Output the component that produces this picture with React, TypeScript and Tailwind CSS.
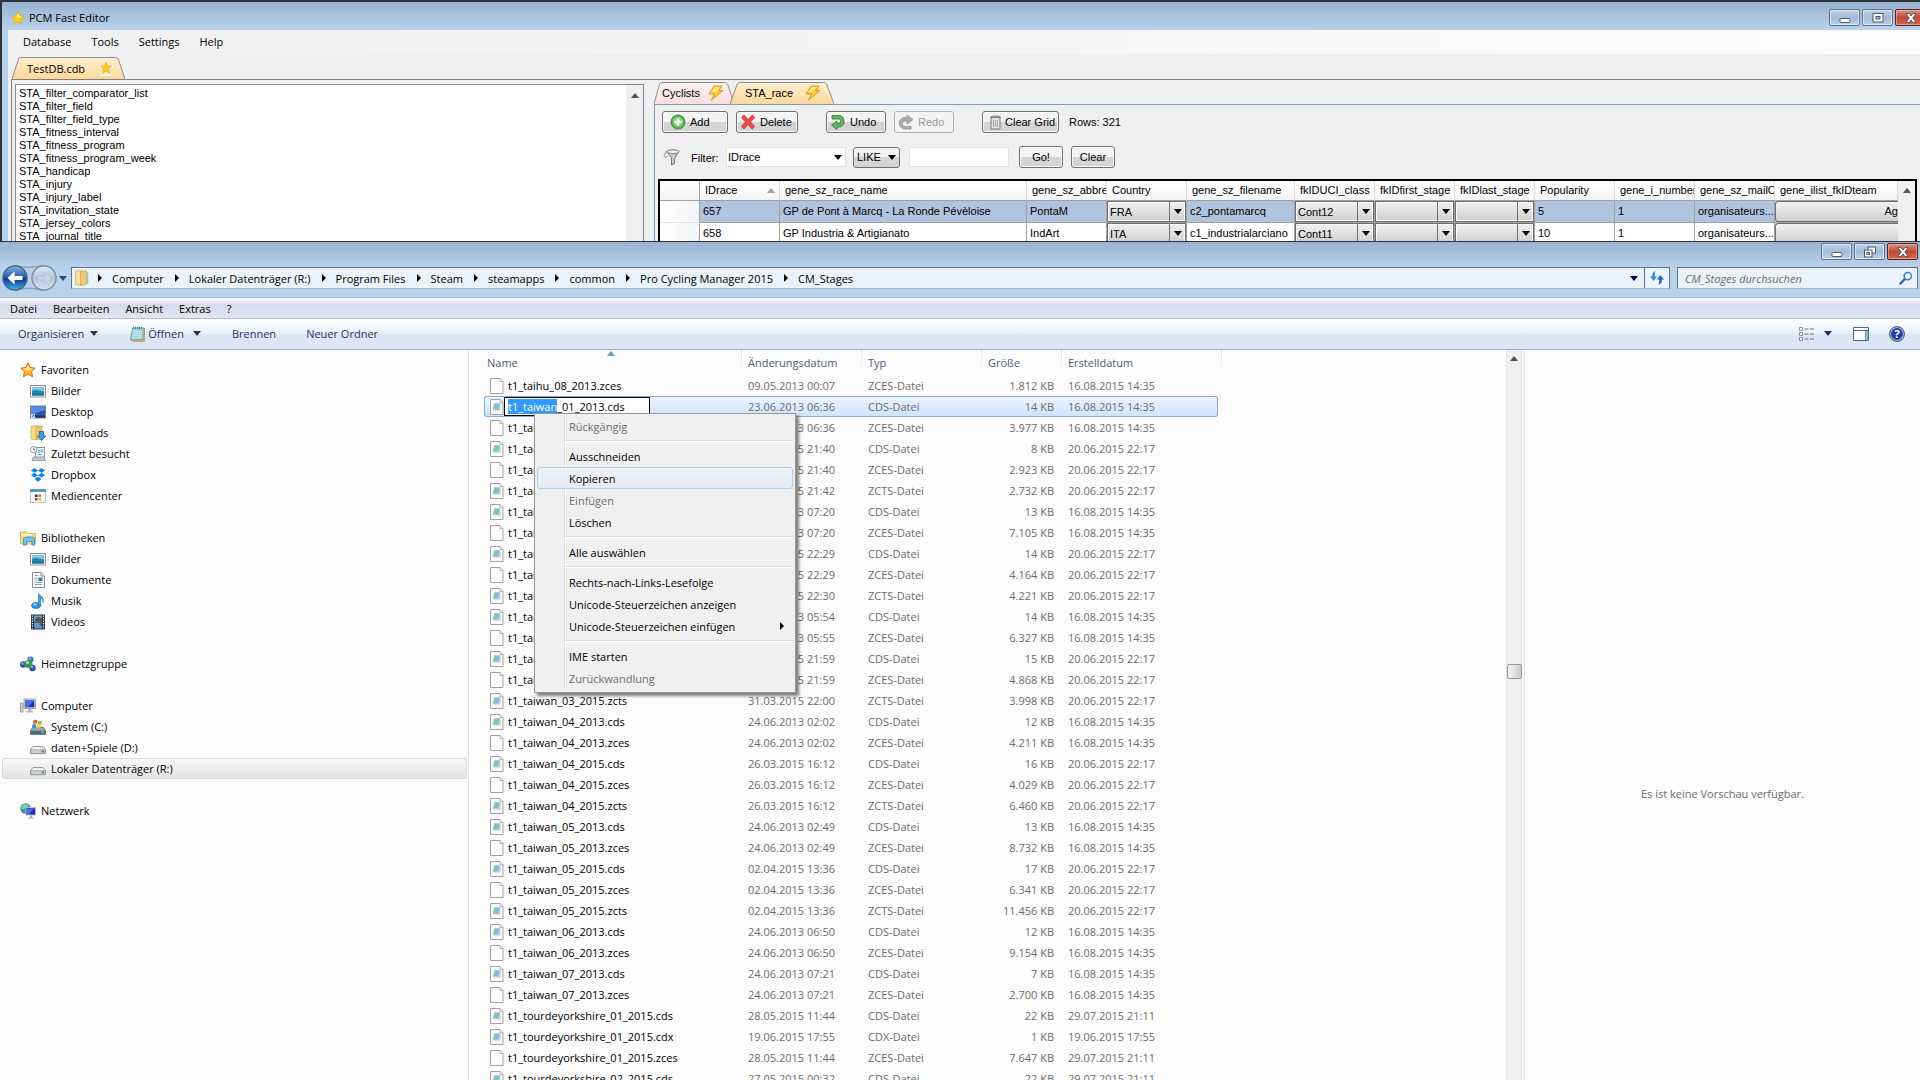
import React from "react";

type IconProps = { className?: string };

/* ---------- small glyphs ---------- */

const CaretDown = ({ className = "" }: IconProps) => (
  <svg viewBox="0 0 8 5" className={`h-[5px] w-2 shrink-0 ${className}`} aria-hidden="true">
    <path d="M0 0h8L4 5z" fill="currentColor" />
  </svg>
);

const CaretUp = ({ className = "" }: IconProps) => (
  <svg viewBox="0 0 8 5" className={`h-[5px] w-2 shrink-0 ${className}`} aria-hidden="true">
    <path d="M0 5h8L4 0z" fill="currentColor" />
  </svg>
);

const CaretRight = ({ className = "" }: IconProps) => (
  <svg viewBox="0 0 4 8" className={`h-2 w-1 shrink-0 ${className}`} aria-hidden="true">
    <path d="M0 0v8l4-4z" fill="currentColor" />
  </svg>
);

const Svg16 = ({ children, className = "h-4 w-4" }: { children: React.ReactNode; className?: string }) => (
  <svg viewBox="0 0 16 16" className={`shrink-0 ${className}`} aria-hidden="true">
    {children}
  </svg>
);

const STAR = "M8 .8l2.200 4.700 5.100.6-3.800 3.500 1 5.100L8 12.200l-4.500 2.500 1-5.100L.7 6.100l5.100-.6z";

const StarIcon = () => (
  <Svg16 className="h-3.5 w-3.5">
    <path d={STAR} fill="#fbd116" stroke="#d9a520" strokeWidth=".8" strokeLinejoin="round" />
    <path d="M8 2.500l1.500 3.600 3.500.5-7 1.400z" fill="#fff27a" />
  </Svg16>
);

const TabStar = () => (
  <Svg16>
    <path d="M2.500 14.500h11v1.500h-11z" fill="#fff" />
    <path d="M8 2l1.700 3.800 4.300.4-3.200 2.900.9 4.400L8 11.300l-3.700 2.200.9-4.400L2 6.200l4.300-.4z" fill="#fbd116" stroke="#fff" strokeWidth="2" strokeLinejoin="round" />
    <path d="M8 2l1.700 3.800 4.300.4-3.200 2.900.9 4.400L8 11.300l-3.700 2.200.9-4.400L2 6.200l4.300-.4z" fill="#fbcb1e" stroke="#d9a520" strokeWidth=".6" />
  </Svg16>
);

const FavStar = () => (
  <Svg16>
    <path d={STAR} fill="#fdb833" stroke="#d8731c" strokeWidth="1" strokeLinejoin="round" />
    <path d="M8 3l1.400 3.300 3.600.5-5 2-5-2 3.600-.5z" fill="#ffe58c" />
  </Svg16>
);

const BoltIcon = () => (
  <Svg16>
    <path d="M6 1h8l-3 4.500h4L3.500 15 6.500 9H1z" fill="#fbcb2e" stroke="#d79a1c" strokeWidth="1" strokeLinejoin="round" />
    <path d="M7 2h5L8 7H3z" fill="#fde58a" />
  </Svg16>
);

const AddIcon = () => (
  <Svg16>
    <circle cx="8" cy="8" r="7" fill="#5cb256" stroke="#3d8b3a" />
    <circle cx="8" cy="8" r="5" fill="#86cf7e" />
    <path d="M8 4.500v7M4.500 8h7" stroke="#fff" strokeWidth="2.400" />
  </Svg16>
);

const DeleteIcon = () => (
  <Svg16>
    <path d="M1.500 3.500L4 1l4 4.500L12.500 1l2 2.500L10.500 8l4 4.500L12 15 8 10.500 4 15l-2.500-2.500L5.500 8z" fill="#ee4b4b" stroke="#c22a2a" strokeWidth=".8" />
  </Svg16>
);

const UndoIcon = () => (
  <Svg16>
    <path d="M2 1.500h7a5 5 0 0 1 5 5V8a5 5 0 0 1-5 5H7v2.500L1.500 11.200 7 7v2.500h2a1.500 1.500 0 0 0 1.500-1.500V6.500A1.500 1.500 0 0 0 9 5H2z" fill="#62b45c" stroke="#35803a" strokeWidth=".9" />
  </Svg16>
);

const RedoIcon = () => (
  <Svg16>
    <path d="M13 12.500v2.500H7a5.500 5.500 0 0 1 0-11.500h2V1l6 4.500L9 10V7H7a2.600 2.600 0 0 0 0 5.500z" fill="#adadad" stroke="#989898" strokeWidth=".9" />
  </Svg16>
);

const TrashIcon = () => (
  <Svg16>
    <path d="M4 3.500h9V15H4z" fill="#e2e2e2" stroke="#7d7d7d" />
    <path d="M3.500 3.500c0-2 10-2 10 0z" fill="#c4c4c4" stroke="#7d7d7d" />
    <path d="M6.500 6v7M8.500 6v7M10.500 6v7" stroke="#a5a5a5" />
  </Svg16>
);

const FunnelIcon = () => (
  <svg viewBox="0 0 18 18" className="h-[18px] w-[18px] shrink-0" aria-hidden="true">
    <path d="M3.500 3.500C6 1.500 13 1.500 16 3.500l-4 6-.5 6-3 1.500V9.500z" fill="#c9c9d2" stroke="#74747f" />
    <ellipse cx="10" cy="3.700" rx="6" ry="1.800" fill="#f1f1f6" stroke="#74747f" strokeWidth=".8" />
    <path d="M4.500 3.500C1 5 .5 8 2 9s3 0 3-1.500" fill="none" stroke="#8c8c96" />
  </svg>
);

/* ---------- explorer icons ---------- */

const PictureIcon = () => (
  <Svg16>
    <rect x=".5" y="2.500" width="15" height="11.500" fill="#fff" stroke="#8b9299" />
    <rect x="2" y="4" width="12" height="8.500" fill="#7cc6ef" />
    <path d="M2 8c3-2 6-1 12 .5v4H2z" fill="#2f8a86" />
    <path d="M2 10.500c4-1 8-.5 12 .5v1.500H2z" fill="#2171b5" />
  </Svg16>
);

const DesktopIcon = () => (
  <Svg16>
    <rect x=".5" y="2" width="15" height="12" fill="#2b56b5" stroke="#7b8697" />
    <path d="M1 2.500h14V6L1 11z" fill="#5b8be0" />
    <path d="M1 11.500h14v2H1z" fill="#27364e" />
    <rect x="1" y="10" width="4" height="4" fill="#cfe4fb" />
    <path d="M2 13l2-2M2.500 11H4v1.500" stroke="#1b5fa8" fill="none" strokeWidth=".8" />
  </Svg16>
);

const DownloadsIcon = () => (
  <Svg16>
    <path d="M1 1.500l6-1V15l-6-1z" fill="#f3dc88" stroke="#c9a94b" strokeWidth=".7" />
    <path d="M6 1h6v13.500H6z" fill="#e8c766" stroke="#c9a94b" strokeWidth=".7" />
    <path d="M9.500 6.500h4V11H16l-4.500 4.500L7.500 11h2z" fill="#3f9be6" stroke="#1b5fa8" strokeWidth=".8" />
  </Svg16>
);

const RecentIcon = () => (
  <Svg16>
    <rect x="5.500" y="1.500" width="9" height="10" fill="#eef3f8" stroke="#8a949e" />
    <path d="M8 4.500h2M8 6.500h2M8 8.500h4" stroke="#5aa0d8" />
    <path d="M10.500 3.500h2.500v3h-2.500z" fill="#7fc0ea" />
    <path d="M3 11h11l1.500 3.500H2z" fill="#c3c8cd" stroke="#8a949e" strokeWidth=".8" />
    <circle cx="3.700" cy="3.700" r="3.200" fill="#fff" stroke="#8a949e" />
    <path d="M3.700 2v2h1.500" stroke="#444455" fill="none" strokeWidth=".8" />
  </Svg16>
);

const DropboxIcon = () => (
  <Svg16>
    <path
      d="M4.500 1L8 3.400 4.500 5.800 1 3.400zM11.500 1L15 3.400l-3.500 2.400L8 3.400zM4.500 5.800L8 8.200l-3.500 2.400L1 8.200zM11.500 5.800L15 8.200l-3.500 2.400L8 8.200zM8 9.500l3.500 2.400L8 14.800l-3.500-2.900z"
      fill="#1081de"
    />
  </Svg16>
);

const MediaIcon = () => (
  <Svg16>
    <rect x=".5" y="1.500" width="15" height="13" fill="#f7f8fa" stroke="#a3a9b0" strokeWidth=".7" />
    <path d="M0 1h16v3H0z" fill="#5899c9" />
    <path d="M5 6.500h2.500V9H5z" fill="#333333" />
    <path d="M8.500 6.500H11V9H8.500z" fill="#d3652b" />
    <path d="M5 10h2.500v2.500H5z" fill="#a23838" />
    <path d="M8.500 10H11v2.500H8.500z" fill="#e8b22c" />
  </Svg16>
);

const LibraryIcon = () => (
  <Svg16>
    <path d="M.5 2h6l1 1.500h8V14H.5z" fill="#f3dc88" stroke="#c9a94b" strokeWidth=".8" />
    <path d="M2 4h10v1.500H2z" fill="#fff6cf" />
    <path d="M3.500 8.500c0-2 11-2 11 0V15H12v-3.500H6.500V15h-3z" fill="#6fc4ee" stroke="#2f84b8" strokeWidth=".8" />
  </Svg16>
);

const DocumentIcon = () => (
  <Svg16>
    <path d="M2.500.5H11L14.500 4v11.500h-12z" fill="#fff" stroke="#868d94" />
    <path d="M11 .5V4h3.500" fill="#dfe3e7" stroke="#868d94" />
    <path d="M4.500 3.500h4M4.500 6h3M4.500 8h3M4.500 10.500h8M4.500 12.500h8" stroke="#8fa3bb" />
    <path d="M8.500 5.500h4v3.500h-4z" fill="#2d73b6" />
  </Svg16>
);

const MusicIcon = () => (
  <Svg16>
    <ellipse cx="6" cy="12.500" rx="4.500" ry="3" fill="#2b93df" stroke="#176bb0" strokeWidth=".6" />
    <path d="M8.500 12.500V.5c1.500 2.500 6 3.500 4.500 9 .2-3-1.200-4-2.500-4.500v7.500z" fill="#3ba3ea" stroke="#176bb0" strokeWidth=".6" />
    <ellipse cx="5" cy="11.500" rx="2" ry="1" fill="#9ad5fa" />
  </Svg16>
);

const VideoIcon = () => (
  <Svg16>
    <rect x="1" y=".5" width="14" height="15" fill="#2a3138" />
    <path d="M4 1.500h8v6H4z" fill="#57a9e4" />
    <path d="M4 8.500h8v6H4z" fill="#4f9bdc" />
    <path d="M5 5l3-2 4 1v3.500H6zM4 12l2 2.500H4zM9 10l3-1v4z" fill="#6d4634" />
    <path d="M2.500 1.500v13M13.500 1.500v13" stroke="#fff" strokeWidth="1.200" strokeDasharray="1.200 1.300" />
  </Svg16>
);

const HomeGroupIcon = () => (
  <Svg16>
    <circle cx="10.500" cy="3.500" r="3" fill="#3c6fd0" />
    <circle cx="3.200" cy="8.500" r="3.200" fill="#2f55b4" />
    <circle cx="12.500" cy="12" r="3.200" fill="#3350b8" />
    <circle cx="8.500" cy="8" r="4" fill="#3f9a4a" />
    <circle cx="7.500" cy="6.500" r="1.600" fill="#a4e29a" />
    <circle cx="2.400" cy="7.500" r="1.100" fill="#a9c6f5" />
    <circle cx="12" cy="11" r="1.100" fill="#a9c6f5" />
    <circle cx="10" cy="2.500" r="1" fill="#a9c6f5" />
  </Svg16>
);

const ComputerIcon = () => (
  <Svg16>
    <rect x="4" y="1" width="11.500" height="9.500" fill="#d6dade" stroke="#8d959d" strokeWidth=".8" />
    <rect x="5.300" y="2.300" width="9" height="7" fill="#1b2fb4" />
    <path d="M5.300 2.300h9L8 9.300H5.300z" fill="#4c6fe6" />
    <path d="M8 10.500h3.500V13H13v1.500H6.500V13H8z" fill="#b5babf" />
    <rect x=".5" y="5" width="2.500" height="9" fill="#cfd4c9" stroke="#868e80" strokeWidth=".7" />
  </Svg16>
);

const SystemDriveIcon = () => (
  <Svg16>
    <path d="M2.500 8.500h11l2 3v4H.5v-4z" fill="#9aa5a8" stroke="#5f6a6d" strokeWidth=".8" />
    <path d="M1 11.800h14V15H1z" fill="#3f6f73" />
    <rect x="11.500" y="12.500" width="2" height="1.500" fill="#8ee36c" />
    <path d="M3.500 1.500c1.500-1 3-.8 4 0L6.800 4.800c-1.200-.8-2.600-.8-4 0z" fill="#e65a28" />
    <path d="M8.300 1.700c1.200.8 2.600.8 4 0l-.8 3.400c-1.400.8-2.800.7-4 0z" fill="#86c440" />
    <path d="M2.500 5.500c1.500-.9 2.900-.8 4 0l-.8 3c-1.300-.7-2.600-.7-4 0z" fill="#3f8fe0" />
    <path d="M7.300 5.700c1.200.8 2.600.8 4 0l-.8 3.200c-1.400.7-2.800.6-4 0z" fill="#f8c62c" />
  </Svg16>
);

const DriveIcon = () => (
  <Svg16>
    <path d="M3 6.500h10l2.500 3v4.200H.5V9.500z" fill="#f2f3f4" stroke="#888d91" strokeWidth=".9" />
    <path d="M.8 9.700h14.400v3.800H.8z" fill="#cdd1d4" stroke="#888d91" strokeWidth=".6" />
    <rect x="11.500" y="10.500" width="2.500" height="2" fill="#5a8f45" />
  </Svg16>
);

const NetworkIcon = () => (
  <Svg16>
    <circle cx="5.500" cy="5.500" r="5.200" fill="#2c8bc4" />
    <path d="M2 2.500c2-1.500 5-2 6-.5S5 5 4 6 1.500 6 .8 5z" fill="#7ed08b" />
    <path d="M5.500 7.500c1.500 0 2 1 1 2.800H5z" fill="#5cba70" />
    <rect x="6" y="4.500" width="9.500" height="7.500" fill="#1b2fb4" stroke="#b7bec6" />
    <path d="M7 5.500h7.500L9 11H7z" fill="#4c6fe6" />
    <path d="M10 12.500h2v2h1.500v1h-5v-1H10z" fill="#a9b0b6" />
  </Svg16>
);

const NotepadIcon = () => (
  <Svg16>
    <path d="M3.500 2h12l-1.500 12H1.500z" fill="#9fd6dd" stroke="#5c9ca6" strokeWidth=".8" />
    <path d="M14 4l1.500-1v12.500H4L2.500 14H14z" fill="#d8b98a" stroke="#8f7a57" strokeWidth=".5" />
    <path d="M4 5.500h9.500M3.800 7.500h9.500M3.500 9.500h9.500M3.300 11.500h9.500" stroke="#c9ecf0" strokeWidth=".8" />
    <path d="M4.500.8v2M6.500.8v2M8.500.8v2M10.500.8v2M12.500.8v2" stroke="#4c6a70" strokeWidth=".9" />
  </Svg16>
);

const FolderIcon = () => (
  <Svg16>
    <path d="M1.500 1l6-.5V15.500l-6-.8z" fill="#f6e29a" stroke="#d0b25a" strokeWidth=".7" />
    <path d="M6.500 1.500l6-.8v13.800l-6 .8z" fill="#ecca6b" stroke="#c9a94b" strokeWidth=".7" />
    <path d="M12.500 2.500h1.800v11.500h-1.800z" fill="#9cc7c4" />
  </Svg16>
);

const FileIcon = ({ blank }: { blank: boolean }) => (
  <svg viewBox="0 0 14 16" className="h-4 w-[14px] shrink-0" aria-hidden="true">
    <path d="M.5.5h9.500l3 3v12H.5z" fill="#fbfbfb" stroke="#a3a3a3" />
    <path d="M10 .5v3h3" fill="#eeeeee" stroke="#a3a3a3" strokeWidth=".8" />
    {!blank && <path d="M4.500 4.500h5.500L8.800 10.500H3z" fill="#7cc0cd" stroke="#a5c8cf" strokeWidth=".7" />}
    {!blank && <path d="M9.500 10.500l1-5.500v6.500H4l-.8-.8z" fill="#c9c4b6" />}
  </svg>
);

/* ---------- window caption buttons ---------- */

function Caption({ maximised }: { maximised: boolean }) {
  const base =
    "flex h-[17px] w-[31px] items-center justify-center rounded-[2px] border border-[#5d7593] bg-linear-to-b from-[#bdd0e6] via-[#a3bcd9] to-[#b9d0e8] shadow-[inset_0_0_0_1px_rgba(255,255,255,0.5)]";
  return (
    <div className="flex gap-0.5">
      <button className={base} aria-label="Minimieren">
        <svg viewBox="0 0 14 10" className="h-[10px] w-[14px]">
          <rect x="2" y="5.500" width="10" height="4" rx="1" fill="#fff" stroke="#4b5a6c" />
        </svg>
      </button>
      <button className={base} aria-label="Maximieren">
        {maximised ? (
          <svg viewBox="0 0 14 12" className="h-3 w-[14px]">
            <rect x="5" y="1" width="7.500" height="6" fill="#fff" stroke="#4b5a6c" />
            <rect x="1.500" y="4" width="7.500" height="7" fill="#fff" stroke="#4b5a6c" />
            <rect x="4" y="6.500" width="2.500" height="2" fill="#a3bcd9" stroke="#4b5a6c" />
          </svg>
        ) : (
          <svg viewBox="0 0 14 12" className="h-3 w-[14px]">
            <rect x="2" y="1.500" width="10" height="8.500" fill="#fff" stroke="#4b5a6c" />
            <rect x="5" y="4.500" width="4" height="2.500" fill="#a3bcd9" stroke="#4b5a6c" />
          </svg>
        )}
      </button>
      <button
        aria-label="Schließen"
        className="flex h-[17px] w-[31px] items-center justify-center rounded-[2px] border border-[#5a1f22] bg-linear-to-b from-[#d98f83] via-[#c14a36] to-[#cf6a50] shadow-[inset_0_0_0_1px_rgba(255,255,255,0.35)]"
      >
        <svg viewBox="0 0 12 10" className="h-[10px] w-3">
          <path d="M1 .5h3l2 2.500L8 .5h3L7.800 5 11 9.500H8L6 7 4 9.500H1L4.200 5z" fill="#fff" stroke="#4c4550" strokeWidth=".8" />
        </svg>
      </button>
    </div>
  );
}

/* ---------- database editor ---------- */

const editorMenus = ["Database", "Tools", "Settings", "Help"];

const tables = [
  "STA_filter_comparator_list",
  "STA_filter_field",
  "STA_filter_field_type",
  "STA_fitness_interval",
  "STA_fitness_program",
  "STA_fitness_program_week",
  "STA_handicap",
  "STA_injury",
  "STA_injury_label",
  "STA_invitation_state",
  "STA_jersey_colors",
  "STA_journal_title",
];

const gridColumns = [
  { label: "IDrace", width: "w-20" },
  { label: "gene_sz_race_name", width: "w-[247px]" },
  { label: "gene_sz_abbre", width: "w-20" },
  { label: "Country", width: "w-20" },
  { label: "gene_sz_filename", width: "w-[108px]" },
  { label: "fkIDUCI_class", width: "w-20" },
  { label: "fkIDfirst_stage", width: "w-20" },
  { label: "fkIDlast_stage", width: "w-20" },
  { label: "Popularity", width: "w-20" },
  { label: "gene_i_number", width: "w-20" },
  { label: "gene_sz_mailO", width: "w-20" },
  { label: "gene_ilist_fkIDteam", width: "" },
];

const races = [
  { id: "657", name: "GP de Pont à Marcq - La Ronde Pévèloise", abbr: "PontaM", country: "FRA", file: "c2_pontamarcq", cls: "Cont12", pop: "5", team: "Ag" },
  { id: "658", name: "GP Industria & Artigianato", abbr: "IndArt", country: "ITA", file: "c1_industrialarciano", cls: "Cont11", pop: "10", team: "" },
];

function Tab({ label, width, active, pink, icon, slant }: { label: string; width: string; active?: boolean; pink?: boolean; icon: React.ReactNode; slant: string }) {
  return (
    <button role="tab" aria-selected={!!active} className={`relative flex h-[22px] items-center justify-between ${width}`}>
      <svg className="absolute inset-0 h-full w-full" viewBox="0 0 100 22" preserveAspectRatio="none" aria-hidden="true">
        <defs>
          <linearGradient id={pink ? "tabPink" : "tabGold"} x1="0" y1="0" x2="0" y2="1">
            <stop offset="0" stopColor={pink ? "#fdf3f2" : "#fef0cf"} />
            <stop offset="1" stopColor={pink ? "#fbdedb" : "#fdd79a"} />
          </linearGradient>
        </defs>
        <path d={slant} fill={pink ? "url(#tabPink)" : "url(#tabGold)"} stroke="#8a8f98" vectorEffect="non-scaling-stroke" />
      </svg>
      <span className="relative">{label}</span>
      <span className="relative">{icon}</span>
    </button>
  );
}

const winButton =
  "flex h-[22px] items-center rounded-[3px] border border-[#707070] bg-linear-to-b from-[#f3f3f3] from-50% to-[#d4d4d4] to-50% shadow-[inset_0_0_0_1px_rgba(255,255,255,0.8)]";

function GridSelect({ value, label }: { value: string; label: string }) {
  return (
    <div className="relative h-[21px] border border-[#707070] bg-linear-to-b from-[#f1f1f1] to-[#cfcfcf] shadow-[inset_0_0_0_1px_#fbfbfb]">
      <select aria-label={label} defaultValue={value} className="h-full w-full appearance-none bg-transparent pl-0.5 text-[11px] leading-4">
        <option>{value}</option>
      </select>
      <span className="pointer-events-none absolute inset-y-0 right-0 flex w-4 items-center justify-center border-l border-[#707070]">
        <CaretDown />
      </span>
    </div>
  );
}

function RaceGrid() {
  return (
    <div className="mx-[3px] flex flex-1 overflow-hidden border-2 border-b-0 border-black bg-white">
      <table className="w-full flex-1 table-fixed border-separate border-spacing-0">
        <thead>
          <tr className="h-5">
            <th className="w-10 border-r border-b border-[#a0a0a0] bg-linear-to-b from-white to-[#f2f3f5]" />
            {gridColumns.map((c, i) => (
              <th key={c.label} className={`overflow-hidden border-r border-r-[#dcdcdc] border-b border-b-[#a0a0a0] bg-linear-to-b from-white to-[#f4f5f6] p-0 text-left font-normal whitespace-nowrap ${c.width}`}>
                <span className="flex items-center justify-between pl-[5px]">
                  {c.label}
                  {i === 0 && <CaretUp className="mr-1 text-[#a0a0a0]" />}
                </span>
              </th>
            ))}
          </tr>
        </thead>
        <tbody>
          {races.map((r, i) => {
            const cell = `overflow-hidden border-r border-b border-[#a0a0a0] p-0 pl-[3px] whitespace-nowrap ${i === 0 ? "bg-[#b0c4de]" : "bg-white"}`;
            const box = "border-r border-b border-[#a0a0a0] bg-white p-0";
            return (
              <tr key={r.id} className="h-[22px]">
                <td className="border-r border-b border-r-[#a0a0a0] border-b-[#e2e2e2] bg-linear-to-r from-white to-[#f2f4f7] p-0" />
                <td className={cell}>{r.id}</td>
                <td className={cell}>{r.name}</td>
                <td className={cell}>{r.abbr}</td>
                <td className={box}><GridSelect value={r.country} label="Country" /></td>
                <td className={cell}>{r.file}</td>
                <td className={box}><GridSelect value={r.cls} label="fkIDUCI_class" /></td>
                <td className={box}><GridSelect value="" label="fkIDfirst_stage" /></td>
                <td className={box}><GridSelect value="" label="fkIDlast_stage" /></td>
                <td className={cell}>{r.pop}</td>
                <td className={cell}>1</td>
                <td className={cell}>organisateurs...</td>
                <td className="overflow-hidden border-b border-[#a0a0a0] p-0">
                  <button className="flex h-[21px] w-full items-center justify-end rounded-l-[3px] border border-r-0 border-[#707070] bg-linear-to-b from-[#f1f1f1] to-[#cfcfcf]">{r.team}</button>
                </td>
              </tr>
            );
          })}
        </tbody>
      </table>
      <div className="flex w-[17px] justify-center bg-[#f0f0f0] pt-[7px]">
        <CaretUp className="text-[#505050]" />
      </div>
    </div>
  );
}

function EditorWindow() {
  return (
    <section className="flex h-[241px] shrink-0 flex-col overflow-hidden border-t-2 border-l-2 border-[#2f3238] bg-[#b9d1ea] font-['Liberation_Sans',Arial,sans-serif] text-[11px] leading-[13px]">
      <header className="flex h-7 shrink-0 items-center justify-between bg-linear-to-b from-[#99b4d1] to-[#b9d1ea] pt-[3px]">
        <h1 className="flex items-center gap-1 pl-[9px] font-['Open_Sans','Noto_Sans',sans-serif]">
          <StarIcon />
          PCM Fast Editor
        </h1>
        <div className="-mr-1.5">
          <Caption maximised={false} />
        </div>
      </header>
      <div className="ml-1.5 flex min-h-0 flex-1 flex-col bg-[#f0f0f0]">
        <nav className="flex h-6 shrink-0 items-center gap-5 bg-linear-to-r from-[#f0f0f0] to-[#fcfcfc] pb-0.5 pl-[15px] font-['Open_Sans','Noto_Sans',sans-serif]">
          {editorMenus.map((m) => (
            <button key={m}>{m}</button>
          ))}
        </nav>
        <div className="mt-[3px] flex shrink-0 pl-1" role="tablist">
          <Tab label="TestDB.cdb" active width="w-[113px] pr-[11px] pl-[15px] font-['Open_Sans','Noto_Sans',sans-serif]" icon={<TabStar />} slant="M0 22L6 1.500Q7 .5 8 .5H91Q93 .5 94 2L100 22" />
        </div>
        <div className="ml-[3px] flex min-h-0 flex-1 gap-2.5 border-t border-l border-[#808080]">
          <div className="mt-1 ml-[3px] flex w-[629px] border border-b-0 border-[#828790] bg-white">
            <ul className="flex-1 pt-0.5 pl-[3px]">
              {tables.map((t) => (
                <li key={t} className="h-[13px] whitespace-nowrap">{t}</li>
              ))}
            </ul>
            <div className="flex w-[17px] justify-center bg-[#f0f0f0] pt-2">
              <CaretUp className="text-[#505050]" />
            </div>
          </div>
          <div className="flex min-w-0 flex-1 flex-col">
            <div className="mt-[2px] flex shrink-0" role="tablist">
              <Tab label="Cyclists" pink width="w-20 pr-[10px] pl-2" icon={<BoltIcon />} slant="M0 22L7 2Q8 .5 10 .5H88Q91 .5 92 2L100 22" />
              <div className="-ml-1">
                <Tab label="STA_race" active width="w-[104px] pr-[13px] pl-[15px]" icon={<BoltIcon />} slant="M0 22L7 2Q8 .5 10 .5H90Q92 .5 93 2L100 22" />
              </div>
            </div>
            <div className="flex min-h-0 flex-1 flex-col border-t border-l border-[#7f9db9]">
              <div className="flex shrink-0 items-center pt-1.5 pl-[7px]">
                <button className={`${winButton} w-[66px] gap-1 pl-[7px]`}><AddIcon />Add</button>
                <button className={`${winButton} ml-2 w-[62px] gap-1 pl-[3px]`}><DeleteIcon />Delete</button>
                <button className={`${winButton} ml-7 w-[60px] gap-1 pl-[3px]`}><UndoIcon />Undo</button>
                <button disabled className="ml-2 flex h-[22px] w-[60px] items-center gap-1 rounded-[3px] border border-[#adb2b5] bg-[#f4f4f4] pl-[3px] text-[#9a9a9a]"><RedoIcon />Redo</button>
                <button className={`${winButton} ml-7 w-[77px] gap-0.5 pl-1`}><TrashIcon />Clear Grid</button>
                <span className="ml-2.5">Rows: 321</span>
              </div>
              <div className="flex shrink-0 items-center pt-[13px] pb-[11px] pl-2">
                <FunnelIcon />
                <label htmlFor="filter-column" className="w-[45px] pt-0.5 pl-2.5">Filter:</label>
                <div className="relative flex">
                  <select id="filter-column" defaultValue="IDrace" className="h-5 w-[120px] appearance-none border border-[#e3e3e3] bg-white pl-px text-[11px]">
                    <option>IDrace</option>
                  </select>
                  <CaretDown className="pointer-events-none absolute top-2 right-1" />
                </div>
                <div className="relative ml-[7px] flex">
                  <select aria-label="Operator" defaultValue="LIKE" className="h-[21px] w-[47px] appearance-none rounded-[3px] border border-[#707070] bg-linear-to-b from-[#f3f3f3] from-50% to-[#d4d4d4] to-50% pl-[3px] text-[11px]">
                    <option>LIKE</option>
                  </select>
                  <CaretDown className="pointer-events-none absolute top-2 right-1" />
                </div>
                <input aria-label="Filter value" className="ml-[9px] h-5 w-[100px] border border-[#e3e3e3] bg-white" />
                <button className={`${winButton} ml-2.5 w-11 justify-center`}>Go!</button>
                <button className={`${winButton} ml-2 w-11 justify-center`}>Clear</button>
              </div>
              <RaceGrid />
            </div>
          </div>
        </div>
      </div>
    </section>
  );
}

/* ---------- explorer ---------- */

const crumbs = ["Computer", "Lokaler Datenträger (R:)", "Program Files", "Steam", "steamapps", "common", "Pro Cycling Manager 2015", "CM_Stages"];

function AddressRow() {
  return (
    <div className="flex items-center">
      <svg viewBox="0 0 58 28" className="ml-px h-7 w-[58px] shrink-0" role="img" aria-label="Zurück und Vorwärts">
        <defs>
          <linearGradient id="navBack" x1="0" y1="0" x2="0" y2="1">
            <stop offset="0" stopColor="#8fb4e6" />
            <stop offset=".5" stopColor="#1d4fa8" />
            <stop offset=".52" stopColor="#0d3480" />
            <stop offset="1" stopColor="#38b6f5" />
          </linearGradient>
          <linearGradient id="navForward" x1="0" y1="0" x2="0" y2="1">
            <stop offset="0" stopColor="#dfe8f3" />
            <stop offset=".5" stopColor="#b4c5d9" />
            <stop offset="1" stopColor="#d3e1ef" />
          </linearGradient>
        </defs>
        <path d="M14 1.500Q28 5 42 1.500M14 26.500Q28 22 42 26.500" fill="none" stroke="#8ba4c2" strokeWidth="1.500" />
        <circle cx="14" cy="14" r="12" fill="url(#navBack)" stroke="#4d6485" strokeWidth="1.500" />
        <circle cx="43" cy="14" r="12" fill="url(#navForward)" stroke="#7d8fa8" strokeWidth="1.500" />
        <path d="M6.500 14l7-6.500v4.500h8v4h-8v4.500z" fill="#fff" />
        <path d="M50.500 14l-7-6v4h-7v4h7v4z" fill="#c9d6e5" stroke="#a9bacd" strokeWidth=".6" />
      </svg>
      <button aria-label="Letzte Seiten" className="pr-1 text-[#1f4e86]"><CaretDown /></button>
      <div className="flex h-[22px] min-w-0 flex-1 items-center border border-[#5d7188] border-b-[#a8bdd3] bg-[#eaf2fb] pl-0.5">
        <FolderIcon />
        {crumbs.map((c, i) => (
          <React.Fragment key={c}>
            <CaretRight className={i === 0 ? "mr-2.5 ml-2" : "mr-2.5 ml-[11px]"} />
            <a href="#" className="whitespace-nowrap">{c}</a>
          </React.Fragment>
        ))}
        <span className="flex-1" />
        <button aria-label="Vorherige Orte" className="mr-1.5 text-[#000050]"><CaretDown /></button>
        <button aria-label="Aktualisieren" className="flex h-full w-[25px] items-center justify-center border-l border-[#5d7188]">
          <Svg16>
            <path d="M6.500 1C3.500 2 3 4 3.200 6.500H1l3.600 4.500L8 6.500H6C5.800 4.500 5.800 2.500 6.500 1z" fill="#3a8fd0" />
            <path d="M9.500 15c3-1 3.500-3 3.300-5.500H15l-3.600-4.500L8 9.500h2c.2 2 .2 4-.5 5.500z" fill="#2c66b4" />
          </Svg16>
        </button>
      </div>
      <div className="mr-0.5 ml-[7px] flex h-[22px] w-[241px] items-center border border-[#5d7188] border-b-[#a8bdd3] bg-[#eaf2fb] px-1">
        <input aria-label="CM_Stages durchsuchen" placeholder="CM_Stages durchsuchen" className="min-w-0 flex-1 bg-transparent pl-[3px] italic placeholder:text-[#6d6d6d]" />
        <Svg16 className="h-3.5 w-3.5">
          <path d="M6.800 9L1.500 14.500" stroke="#2a66b0" strokeWidth="2.500" strokeLinecap="round" />
          <circle cx="10" cy="5.800" r="4.200" fill="#e4f3fd" stroke="#3f86c9" strokeWidth="1.700" />
        </Svg16>
      </div>
    </div>
  );
}

function Toolbar() {
  return (
    <div className="flex h-[31px] shrink-0 items-center border-b border-[#9bb3cc] bg-linear-to-b from-white via-[#e8f1fb] via-48% to-[#dce6f4] to-52% pb-px pl-[18px] text-[#1e395b]">
      <button className="flex items-center gap-1.5">Organisieren<CaretDown /></button>
      <button className="ml-[31px] flex items-center gap-[3px]"><NotepadIcon />Öffnen<CaretDown className="ml-1.5" /></button>
      <button className="ml-[31px]">Brennen</button>
      <button className="ml-[30px]">Neuer Ordner</button>
      <div className="flex-1" />
      <button aria-label="Ansicht ändern" className="flex items-center gap-2.5">
        <Svg16>
          <path d="M1.500 1.500h3v3h-3zM1.500 6.500h3v3h-3zM1.500 11.500h3v3h-3z" fill="#fff" stroke="#7f93aa" />
          <path d="M6.500 3h4M12 3h4M6.500 8h4M12 8h4M6.500 13h4M12 13h4" stroke="#5f7590" />
        </Svg16>
        <CaretDown />
      </button>
      <button aria-label="Vorschaufenster" className="ml-[21px]">
        <Svg16>
          <path d="M.5 1.500h15v13H.5z" fill="#fff" stroke="#4c6a8c" />
          <path d="M1 4.500h14" stroke="#4c6a8c" />
          <path d="M12.500 5h2.500v9h-2.500z" fill="#8ec6d6" stroke="#4a8797" strokeWidth=".7" />
        </Svg16>
      </button>
      <button aria-label="Hilfe" className="mr-[15px] ml-5 flex h-4 w-4 items-center justify-center rounded-full border border-[#5a6a86] bg-[#2443a8] text-[11px] leading-none font-bold text-white shadow-[inset_0_0_0_1px_#b9c6e6]">?</button>
    </div>
  );
}

type NavItem = { label: string; icon: () => React.ReactElement; selected?: boolean };
const navGroups: { head: NavItem; items: NavItem[] }[] = [
  {
    head: { label: "Favoriten", icon: FavStar },
    items: [
      { label: "Bilder", icon: PictureIcon },
      { label: "Desktop", icon: DesktopIcon },
      { label: "Downloads", icon: DownloadsIcon },
      { label: "Zuletzt besucht", icon: RecentIcon },
      { label: "Dropbox", icon: DropboxIcon },
      { label: "Mediencenter", icon: MediaIcon },
    ],
  },
  {
    head: { label: "Bibliotheken", icon: LibraryIcon },
    items: [
      { label: "Bilder", icon: PictureIcon },
      { label: "Dokumente", icon: DocumentIcon },
      { label: "Musik", icon: MusicIcon },
      { label: "Videos", icon: VideoIcon },
    ],
  },
  { head: { label: "Heimnetzgruppe", icon: HomeGroupIcon }, items: [] },
  {
    head: { label: "Computer", icon: ComputerIcon },
    items: [
      { label: "System (C:)", icon: SystemDriveIcon },
      { label: "daten+Spiele (D:)", icon: DriveIcon },
      { label: "Lokaler Datenträger (R:)", icon: DriveIcon, selected: true },
    ],
  },
  { head: { label: "Netzwerk", icon: NetworkIcon }, items: [] },
];

function Sidebar() {
  return (
    <nav className="flex w-[469px] shrink-0 flex-col gap-[21px] border-r border-[#d6e5f5] pt-[9px] pr-px pl-0.5">
      {navGroups.map(({ head, items }) => (
        <ul key={head.label}>
          <li>
            <a href="#" className="flex h-[21px] items-center gap-[5px] pl-[18px]"><head.icon />{head.label}</a>
          </li>
          {items.map((it) => (
            <li key={it.label}>
              <a
                href="#"
                className={`flex h-[21px] items-center gap-[5px] rounded-[2px] border pl-[27px] ${it.selected ? "border-[#d9d9d9] bg-linear-to-b from-[#f8f8f8] to-[#e5e5e5]" : "border-transparent"}`}
              >
                <it.icon />
                {it.label}
              </a>
            </li>
          ))}
        </ul>
      ))}
    </nav>
  );
}

const A = "16.08.2015 14:35";
const B = "20.06.2015 22:17";
const C = "29.07.2015 21:11";

const files: [string, string, string, string][] = [
  ["t1_taihu_08_2013.zces", "09.05.2013 00:07", "1.812", A],
  ["t1_taiwan_01_2013.cds", "23.06.2013 06:36", "14", A],
  ["t1_taiwan_01_2013.zces", "23.06.2013 06:36", "3.977", A],
  ["t1_taiwan_01_2015.cds", "25.03.2015 21:40", "8", B],
  ["t1_taiwan_01_2015.zces", "25.03.2015 21:40", "2.923", B],
  ["t1_taiwan_01_2015.zcts", "25.03.2015 21:42", "2.732", B],
  ["t1_taiwan_02_2013.cds", "23.06.2013 07:20", "13", A],
  ["t1_taiwan_02_2013.zces", "23.06.2013 07:20", "7.105", A],
  ["t1_taiwan_02_2015.cds", "25.03.2015 22:29", "14", B],
  ["t1_taiwan_02_2015.zces", "25.03.2015 22:29", "4.164", B],
  ["t1_taiwan_02_2015.zcts", "25.03.2015 22:30", "4.221", B],
  ["t1_taiwan_03_2013.cds", "24.06.2013 05:54", "14", A],
  ["t1_taiwan_03_2013.zces", "24.06.2013 05:55", "6.327", A],
  ["t1_taiwan_03_2015.cds", "31.03.2015 21:59", "15", B],
  ["t1_taiwan_03_2015.zces", "31.03.2015 21:59", "4.868", B],
  ["t1_taiwan_03_2015.zcts", "31.03.2015 22:00", "3.998", B],
  ["t1_taiwan_04_2013.cds", "24.06.2013 02:02", "12", A],
  ["t1_taiwan_04_2013.zces", "24.06.2013 02:02", "4.211", A],
  ["t1_taiwan_04_2015.cds", "26.03.2015 16:12", "16", B],
  ["t1_taiwan_04_2015.zces", "26.03.2015 16:12", "4.029", B],
  ["t1_taiwan_04_2015.zcts", "26.03.2015 16:12", "6.460", B],
  ["t1_taiwan_05_2013.cds", "24.06.2013 02:49", "13", A],
  ["t1_taiwan_05_2013.zces", "24.06.2013 02:49", "8.732", A],
  ["t1_taiwan_05_2015.cds", "02.04.2015 13:36", "17", B],
  ["t1_taiwan_05_2015.zces", "02.04.2015 13:36", "6.341", B],
  ["t1_taiwan_05_2015.zcts", "02.04.2015 13:36", "11.456", B],
  ["t1_taiwan_06_2013.cds", "24.06.2013 06:50", "12", A],
  ["t1_taiwan_06_2013.zces", "24.06.2013 06:50", "9.154", A],
  ["t1_taiwan_07_2013.cds", "24.06.2013 07:21", "7", A],
  ["t1_taiwan_07_2013.zces", "24.06.2013 07:21", "2.700", A],
  ["t1_tourdeyorkshire_01_2015.cds", "28.05.2015 11:44", "22", C],
  ["t1_tourdeyorkshire_01_2015.cdx", "19.06.2015 17:55", "1", "19.06.2015 17:55"],
  ["t1_tourdeyorkshire_01_2015.zces", "28.05.2015 11:44", "7.647", C],
  ["t1_tourdeyorkshire_02_2015.cds", "27.05.2015 00:32", "22", C],
];

const divider = "bg-[linear-gradient(to_bottom,#d5e3f2,#fcfcfc)] bg-[length:1px_22px] bg-right-top bg-no-repeat";

const fileColumns = [
  { label: "Name", style: `w-[258px] pl-[3px] ${divider}` },
  { label: "Änderungsdatum", style: `w-[120px] pl-1.5 ${divider}` },
  { label: "Typ", style: `w-[120px] pl-1.5 ${divider}` },
  { label: "Größe", style: `w-20 pl-1.5 ${divider}` },
  { label: "Erstelldatum", style: "w-[156px] pl-1.5" },
];

function FileTable() {
  return (
    <table className="ml-[15px] w-[738px] table-fixed border-separate border-spacing-0 text-[#6d6d6d]">
      <thead>
        <tr className="h-[25px]">
          {fileColumns.map((c) => (
            <th key={c.label} className={`py-0 pr-0 text-left font-normal text-[#4c607a] ${c.style}`}>
              <span className="relative block">
                {c.label}
                {c.label === "Name" && <CaretUp className="absolute -top-1 left-[120px] text-[#6f9dbb]" />}
              </span>
            </th>
          ))}
          <td className={`w-1 p-0 ${divider}`} />
        </tr>
      </thead>
      <tbody>
        {files.map(([name, date, size, created], i) => {
          const ext = name.slice(name.lastIndexOf(".") + 1);
          const sel = i === 1;
          const mid = sel ? "border-y border-[#84acdd] bg-linear-to-b from-[#ebf4fe] to-[#cfe4fe]" : "";
          return (
            <tr key={name} className="h-[21px]">
              <td className={`p-0 text-black ${mid} ${sel ? "rounded-l-[3px] border-l pl-[5px]" : "pl-1.5"}`}>
                <span className="flex items-center whitespace-nowrap">
                  <FileIcon blank={ext === "zces"} />
                  {sel ? (
                    <span className="flex h-[19px] w-[146px] items-center border border-black bg-white pl-[3px]">
                      <span className="bg-[#3399ff] text-white">t1_taiwan</span>_01_2013.cds
                    </span>
                  ) : (
                    <span className="pl-1">{name}</span>
                  )}
                </span>
              </td>
              <td className={`p-0 pl-1.5 whitespace-nowrap ${mid}`}>{date}</td>
              <td className={`p-0 pl-1.5 ${mid}`}>{ext.toUpperCase()}-Datei</td>
              <td className={`p-0 pr-2 text-right ${mid}`}>{size} KB</td>
              <td className={`p-0 pl-1.5 ${mid} ${sel ? "rounded-r-[3px] border-r" : ""}`}>{created}</td>
            </tr>
          );
        })}
      </tbody>
    </table>
  );
}

const menuSections: { label: string; disabled?: boolean; hot?: boolean; sub?: boolean }[][] = [
  [{ label: "Rückgängig", disabled: true }],
  [{ label: "Ausschneiden" }, { label: "Kopieren", hot: true }, { label: "Einfügen", disabled: true }, { label: "Löschen" }],
  [{ label: "Alle auswählen" }],
  [{ label: "Rechts-nach-Links-Lesefolge" }, { label: "Unicode-Steuerzeichen anzeigen" }, { label: "Unicode-Steuerzeichen einfügen", sub: true }],
  [{ label: "IME starten" }, { label: "Zurückwandlung", disabled: true }],
];

function ContextMenu() {
  return (
    <div role="menu" className="absolute top-[63px] left-[65px] w-[262px] border border-[#979797] bg-[#f0f0f0] px-0.5 pt-px pb-[3px] shadow-[3px_3px_3px_rgba(0,0,0,0.5)]">
      <div className="bg-[linear-gradient(to_right,#e2e3e3_50%,#ffffff_50%)] bg-[length:2px_100%] bg-[position:27px_0] bg-no-repeat">
        {menuSections.map((items, s) => (
          <div key={s}>
            {s > 0 && (
              <div role="separator" className="flex h-2 flex-col justify-center pl-7">
                <div className="border-t border-b border-t-[#e0e0e0] border-b-white" />
              </div>
            )}
            {items.map((it) => (
              <button
                key={it.label}
                role="menuitem"
                disabled={it.disabled}
                className={`flex h-[22px] w-full items-center justify-between rounded-[3px] border pr-2 pl-[31px] ${it.hot ? "border-[#aecff7] bg-linear-to-b from-[#eff2f7]/80 to-[#e3eaf5]/80" : "border-transparent"} ${it.disabled ? "text-[#6d6d6d]" : "text-black"}`}
              >
                {it.label}
                {it.sub && <CaretRight />}
              </button>
            ))}
          </div>
        ))}
      </div>
    </div>
  );
}

function ExplorerWindow() {
  return (
    <section className="flex min-h-0 flex-1 flex-col border-t border-[#2f3238] bg-[#fcfcfc] font-['Open_Sans','Noto_Sans',sans-serif] text-[11px] leading-[15px]">
      <header className="shrink-0 border-b border-[#9db9d6] bg-linear-to-b from-[#99b4d1] to-[#b9d1ea] to-45%">
        <div className="flex h-[22px] justify-end pt-px pr-0.5">
          <Caption maximised />
        </div>
        <div className="h-[33px]">
          <AddressRow />
        </div>
      </header>
      <nav className="flex h-[21px] shrink-0 items-center gap-4 border-b border-[#b3bac8] bg-linear-to-b from-white via-[#d5daec] via-35% to-[#e3e6f4] pl-2.5">
        {["Datei", "Bearbeiten", "Ansicht", "Extras", "?"].map((m) => (
          <button key={m}>{m}</button>
        ))}
      </nav>
      <Toolbar />
      <div className="flex min-h-0 flex-1">
        <Sidebar />
        <main className="relative flex min-w-0 flex-1 overflow-hidden">
          <div className="min-w-0 flex-1">
            <FileTable />
          </div>
          <div className="mr-0.5 flex w-4 shrink-0 flex-col items-center border-x border-[#e6e6e6] bg-[#f0f0f0] pt-1.5">
            <CaretUp className="text-[#505050]" />
            <div className="mt-[303px] h-[15px] w-[15px] shrink-0 rounded-[2px] border border-[#979797] bg-linear-to-r from-[#f6f6f6] to-[#cdcdd0]" />
          </div>
          <ContextMenu />
        </main>
        <aside className="flex w-[396px] shrink-0 items-center justify-center border-l border-[#d6e5f5] text-[#6d6d6d]">
          <p className="pt-[156px]">Es ist keine Vorschau verfügbar.</p>
        </aside>
      </div>
    </section>
  );
}

export default function App() {
  return (
    <div className="flex h-screen flex-col overflow-hidden text-black">
      <EditorWindow />
      <ExplorerWindow />
    </div>
  );
}
